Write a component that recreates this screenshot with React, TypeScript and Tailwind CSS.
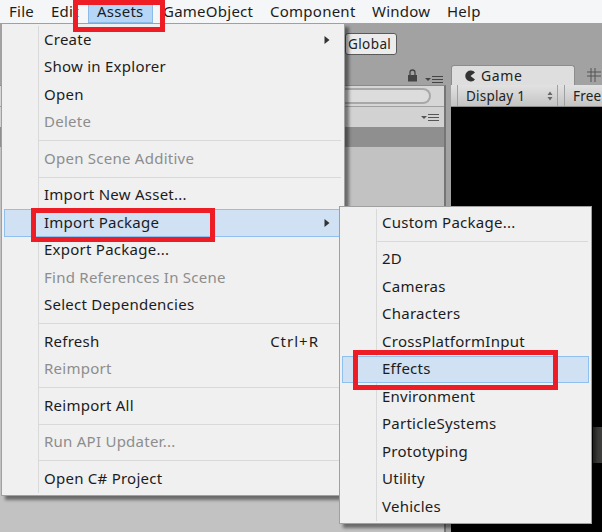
type Item = { label?: string; off?: boolean; arrow?: boolean; key2?: string; hot?: boolean; sep?: boolean };

const mainItems: Item[] = [
  { label: "Create", arrow: true },
  { label: "Show in Explorer" },
  { label: "Open" },
  { label: "Delete", off: true },
  { sep: true },
  { label: "Open Scene Additive", off: true },
  { sep: true },
  { label: "Import New Asset..." },
  { label: "Import Package", arrow: true, hot: true },
  { label: "Export Package..." },
  { label: "Find References In Scene", off: true },
  { label: "Select Dependencies" },
  { sep: true },
  { label: "Refresh", key2: "Ctrl+R" },
  { label: "Reimport", off: true },
  { sep: true },
  { label: "Reimport All" },
  { sep: true },
  { label: "Run API Updater...", off: true },
  { sep: true },
  { label: "Open C# Project" },
];

const subItems: Item[] = [
  { label: "Custom Package..." },
  { sep: true },
  { label: "2D" },
  { label: "Cameras" },
  { label: "Characters" },
  { label: "CrossPlatformInput" },
  { label: "Effects", hot: true },
  { label: "Environment" },
  { label: "ParticleSystems" },
  { label: "Prototyping" },
  { label: "Utility" },
  { label: "Vehicles" },
];

const nav = [
  { t: "File", w: "w-[42px]" },
  { t: "Edit", w: "w-[46px]" },
  { t: "Assets", w: "w-[66px]" },
  { t: "GameObject", w: "w-[107px]" },
  { t: "Component", w: "w-[102px]" },
  { t: "Window", w: "w-[75px]" },
  { t: "Help", w: "w-[40px]" },
];

function Arrow() {
  return (
    <svg width="6" height="10" viewBox="0 0 6 10" className="absolute right-[11px] top-[8px]">
      <path d="M0.5 1 L5.5 5 L0.5 9 Z" fill="#333" />
    </svg>
  );
}

function Row({ item }: { item: Item }) {
  if (item.sep) {
    return (
      <div className="h-[9px] flex items-center pl-[35px] pr-[1px]">
        <div className="h-px w-full bg-[#d9d9d9]" />
      </div>
    );
  }
  return (
    <div
      className={`relative h-[27.5px] flex items-center justify-between pl-[39px] pr-[22px] pb-[2px] border ${
        item.hot ? "bg-[#cfe1f2] border-[#90c0ee]" : "border-transparent"
      } ${item.off ? "text-[#8d8d8d]" : "text-[#1c1c1c]"}`}
    >
      <span>{item.label}</span>
      {item.key2 && <span className="tracking-[1px]">{item.key2}</span>}
      {item.arrow && <Arrow />}
    </div>
  );
}

function Menu({ items, className }: { items: Item[]; className: string }) {
  return (
    <div
      className={`absolute bg-[#f0f0f0] border border-[#a0a0a0] p-[2px] text-[15px] tracking-[0.25px] shadow-[4px_4px_3px_rgba(0,0,0,0.45)] ${className}`}
    >
      {/* linea junto a la columna de iconos */}
      <div className="absolute top-[2px] bottom-[2px] left-[36px] w-px bg-[#d9d9d9]" />
      <div className="relative">
        {items.map((it, i) => (
          <Row key={i} item={it} />
        ))}
      </div>
    </div>
  );
}

function PanelMenuIcon({ color }: { color: string }) {
  return (
    <svg width="18" height="7" viewBox="0 0 18 7">
      <path d="M0 2h6L3 5Z" fill={color} />
      <path d="M7 0.5h11M7 3.5h11M7 6.5h11" stroke={color} strokeWidth="1" fill="none" />
    </svg>
  );
}

function LeftPanel() {
  return (
    <div className="w-[451px] flex flex-col">
      <div className="h-[20px] shrink-0 flex items-end justify-end gap-[7px] pr-[8px] pb-[1px]">
        <svg width="11" height="13" viewBox="0 0 11 13" className="mb-[2px]">
          <path d="M3 6V3.5a2.5 2.5 0 0 1 5 0V6" fill="none" stroke="#444" strokeWidth="1.3" />
          <rect x="1" y="6" width="9" height="6.5" fill="#444" />
        </svg>
        <div className="mb-[1px]">
          <PanelMenuIcon color="#444" />
        </div>
      </div>
      <div className="flex-1 mr-[5px] bg-[#c2c2c2] border-t border-r-2 border-t-[#8a8a8a] border-r-[#757575] flex flex-col">
        <div className="h-[21px] bg-[#d6d6d6] border-b border-[#a0a0a0] flex items-center justify-end pr-[13px]">
          <div className="w-[100px] h-[16px] rounded-r-full border-2 border-l-0 border-[#a8a8a8] bg-[#dcdcdc]" />
        </div>
        <div className="h-[20px] bg-[#d2d2d2] flex items-center justify-end pr-[5px]">
          <PanelMenuIcon color="#555" />
        </div>
        <div className="h-[20px] bg-[#8f8f8f]" />
      </div>
    </div>
  );
}

function GamePanel() {
  return (
    <div className="flex-1 flex flex-col">
      <div className="h-[20px] shrink-0 flex items-start gap-[12px]">
        <div className="w-[124px] h-[20px] rounded-t-[3px] bg-[#dedede] border border-b-0 border-[#8c8c8c] text-[#222] text-[14px] tracking-[0.6px] flex items-center pl-[12px] gap-[5px]">
          <svg width="12" height="12" viewBox="0 0 12 12">
            <path d="M11 2.5A5.5 5.5 0 1 0 11 9.5L6.5 6Z" fill="#333" />
          </svg>
          Game
        </div>
        <svg width="14" height="14" viewBox="0 0 14 14" className="mt-[3px]">
          <path d="M4 0v14M8 0v14M0 4h14M0 8h14" stroke="#555" strokeWidth="1" fill="none" />
        </svg>
      </div>
      <div className="h-[22px] shrink-0 bg-gradient-to-b from-[#e2e2e2] to-[#c4c4c4] border-b border-[#8c8c8c] flex text-[13.5px] tracking-[0.2px] text-[#222] whitespace-nowrap overflow-hidden">
        <div className="w-[7px] border-r border-[#a0a0a0]" />
        <div className="w-[100px] pl-[8px] pr-[4px] pt-[1px] border-r border-[#a0a0a0] flex items-center justify-between">
          Display 1
          <svg width="6" height="10" viewBox="0 0 6 10">
            <path d="M3 0.5 L5.5 4 H0.5Z M3 9.5 L5.5 6 H0.5Z" fill="#666" />
          </svg>
        </div>
        <div className="w-[7px] border-r border-[#a0a0a0]" />
        <div className="pl-[8px] pt-[1px] flex items-center">Free</div>
      </div>
      <div className="flex-1 bg-black flex justify-end pt-[320px]">
        <div className="w-[9px] h-[36px] bg-[#3c3c3a]" />
      </div>
    </div>
  );
}

export default function App() {
  return (
    <div
      className="relative w-[602px] h-[532px] overflow-hidden bg-[#a2a2a2] flex flex-col"
      style={{ fontFamily: '"Noto Sans", sans-serif' }}
    >
      <div className="h-[23px] shrink-0 bg-[#f5f6f7] text-[15px] tracking-[0.25px] text-[#1c1c1c] flex items-center pl-[9px] pb-[1px]">
        {nav.map((n) => (
          <span key={n.t} className={`${n.w} shrink-0`}>
            {n.t}
          </span>
        ))}
      </div>

      {/* barra gris con el boton Global */}
      <div className="h-[42px] shrink-0 flex items-start pl-[345px] pt-[10px]">
        <div className="h-[22px] w-[52px] rounded-[3px] border border-[#5a5a5a] bg-[#ececec] text-[13.5px] tracking-[0.4px] text-[#222] flex items-center pl-[2px]">
          Global
        </div>
      </div>

      <div className="flex-1 flex min-h-0">
        <LeftPanel />
        <GamePanel />
      </div>

      {/* resaltado de Assets en la barra */}
      <div className="absolute left-[88px] top-0 w-[65px] h-[23px] bg-[#b5d6f7] border border-[#8cbbe8] text-[15px] tracking-[0.25px] text-[#1c1c1c] flex items-center pl-[8px] pb-[1px]">
        Assets
      </div>

      <Menu items={mainItems} className="left-[1px] top-[23px] w-[344px]" />
      <Menu items={subItems} className="left-[339px] top-[206px] w-[253px]" />

      {/* recuadros rojos */}
      <div className="absolute left-[73px] top-0 w-[92px] h-[32px] border-[5px] border-[#ee1c25]" />
      <div className="absolute left-[31px] top-[208px] w-[184px] h-[34px] border-[5px] border-[#ee1c25]" />
      <div className="absolute left-[353px] top-[350px] w-[205px] h-[40px] border-[5px] border-[#ee1c25]" />
    </div>
  );
}
